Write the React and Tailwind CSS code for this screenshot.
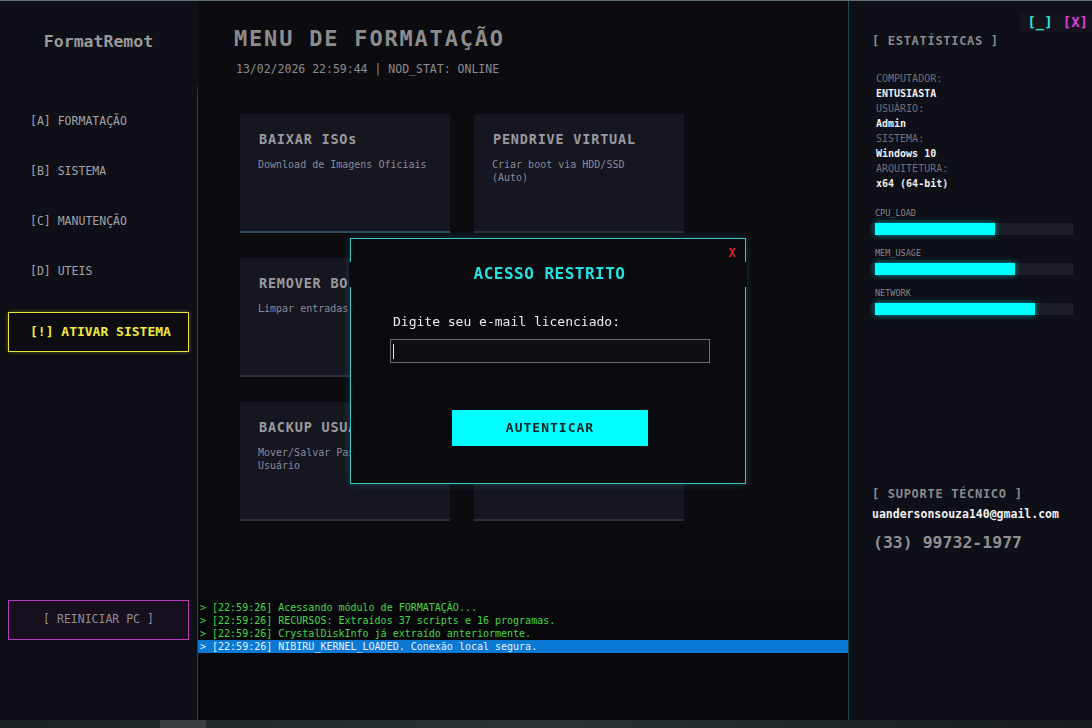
import React from 'react';

const mono = "font-['DejaVu_Sans_Mono','Liberation_Mono',monospace]";

const menu = ['[A] FORMATAÇÃO', '[B] SISTEMA', '[C] MANUTENÇÃO', '[D] UTEIS'];

const cards = [
    { title: 'BAIXAR ISOs', desc: 'Download de Imagens Oficiais', active: true },
    { title: 'PENDRIVE VIRTUAL', desc: 'Criar boot via HDD/SSD (Auto)' },
    { title: 'REMOVER BOOT', desc: 'Limpar entradas de boot' },
    { title: 'DRIVERS', desc: 'Backup e restauração' },
    { title: 'BACKUP USUÁRIO', desc: 'Mover/Salvar Pastas do Usuário' },
    { title: 'PÓS-FORMATAÇÃO', desc: 'Programas essenciais' },
];

const info = [
    ['COMPUTADOR:', 'ENTUSIASTA'],
    ['USUÁRIO:', 'Admin'],
    ['SISTEMA:', 'Windows 10'],
    ['ARQUITETURA:', 'x64 (64-bit)'],
];

const bars = [
    { label: 'CPU_LOAD', value: 60.6 },
    { label: 'MEM_USAGE', value: 70.7 },
    { label: 'NETWORK', value: 80.8 },
];

const logs = [
    'Acessando módulo de FORMATAÇÃO...',
    'RECURSOS: Extraídos 37 scripts e 16 programas.',
    'CrystalDiskInfo já extraído anteriormente.',
    'NIBIRU_KERNEL_LOADED. Conexão local segura.',
];

const Sidebar = () => (
    <div className="w-[197px] flex flex-col bg-[#0e0f17] px-[8px] pb-[80px]">
        <div className="pt-[31px] h-[96px] text-center text-[16.5px] leading-[20px] font-bold text-[#9a9a9a]">FormatRemot</div>
        {menu.map(m => (
            <div key={m} className="h-[50px] flex items-center pl-[22px] text-[11.5px] text-[#a3a3a8]">{m}</div>
        ))}
        <div className="mt-[15px] h-[40px] flex items-center pl-[21px] border border-[#ede63a] bg-[#0c0c11] shadow-[0_0_4px_rgba(237,230,58,0.35)] text-[13px] font-bold text-[#f2ea3c]">[!] ATIVAR SISTEMA</div>
        <div className="mt-auto h-[40px] flex items-center justify-center border border-[#b83db8] bg-[#170f1d] text-[11.5px] text-[#8e8e96]">[ REINICIAR PC ]</div>
    </div>
);

const Card = ({ title, desc, active }) => (
    <div className={`h-[119px] bg-[#161620] border-b-2 ${active ? 'border-[#284f5a]' : 'border-[#2c2c3a]'} pt-[17px] pl-[19px] pr-[8px]`}>
        <div className="text-[13.5px] leading-[16px] font-bold tracking-[0.8px] text-[#9a9a9e]">{title}</div>
        <div className="mt-[11px] ml-[-1px] text-[10px] leading-[13px] text-[#8a8a96] w-[171px]">{desc}</div>
    </div>
);

const Main = () => (
    <div className="w-[650px] flex flex-col bg-[#0b0b10]">
        <div className="flex-1 pl-[36px]">
            <div className="pt-[24px] text-[22px] leading-[28px] font-bold tracking-[1.8px] text-[#8c8c8c]">MENU DE FORMATAÇÃO</div>
            <div className="mt-[9px] pl-[2px] text-[11.5px] leading-[14px] text-[#8c8c90]">13/02/2026 22:59:44 | NOD_STAT: ONLINE</div>
            <div className="mt-[38px] ml-[6px] grid grid-cols-[210px_210px] gap-x-[24px] gap-y-[25px]">
                {cards.map(c => <Card key={c.title} {...c} />)}
            </div>
        </div>
        <div className="h-[120px] bg-[#08080c] pt-[1px] text-[10px] leading-[13px]">
            {logs.map((l, i) => (
                <div key={i} className={`pl-[2px] whitespace-pre ${i === 3 ? 'bg-[#0b78d4] text-[#e6f2ff]' : 'text-[#45d845]'}`}>{'> [22:59:26] ' + l}</div>
            ))}
        </div>
    </div>
);

const Stats = () => (
    <div className="relative w-[243px] flex flex-col bg-[#0e0f17] pl-[23px] pr-[19px]">
        <div className="absolute top-[11px] right-0 w-[72px] h-[20px] bg-[#13141c] flex items-center justify-end gap-[10px] pr-[4px] text-[14px] font-bold">
            <span className="text-[#2ee6d6]">[_]</span>
            <span className="text-[#e03ce0]">[X]</span>
        </div>
        <div className="mt-[32px] text-[12px] leading-[16px] font-bold tracking-[0.7px] text-[#8a8a8e]">[ ESTATÍSTICAS ]</div>
        <div className="mt-[22px] pl-[4px] text-[10px] leading-[15px]">
            {info.map(([k, v]) => (
                <React.Fragment key={k}>
                    <div className="text-[#6f6f76]">{k}</div>
                    <div className="font-bold text-[#f0f0f0]">{v}</div>
                </React.Fragment>
            ))}
        </div>
        <div className="mt-[17px] pl-[3px]">
            {bars.map(b => (
                <div key={b.label} className="mb-[13px]">
                    <div className="text-[8.5px] leading-[10px] text-[#85858c]">{b.label}</div>
                    <div className="mt-[5px] h-[12px] bg-[#1c1d27]">
                        <div className="h-full bg-[#00ffff] shadow-[0_0_6px_rgba(0,255,255,0.6)]" style={{ width: `${b.value}%` }} />
                    </div>
                </div>
            ))}
        </div>
        <div className="mt-[158px] text-[12px] leading-[16px] font-bold tracking-[0.7px] text-[#8a8a8e]">[ SUPORTE TÉCNICO ]</div>
        <div className="mt-[5px] text-[11.5px] leading-[14px] font-bold text-[#f2f2f2]">uandersonsouza140@gmail.com</div>
        <div className="mt-[11px] pl-[1px] text-[16.5px] leading-[22px] font-bold text-[#909094]">(33) 99732-1977</div>
    </div>
);

const Modal = () => (
    <div className="fixed inset-0 flex items-center justify-center pb-[6px] pl-[4px] pointer-events-none">
        <div className={`relative w-[396px] h-[246px] bg-[#0a0a0f] border border-[#3cc6c6] shadow-[0_0_8px_rgba(60,198,198,0.25)] flex flex-col items-center pointer-events-auto ${mono}`}>
            <span className="absolute left-[-2px] top-[23px] w-[3px] h-[25px] bg-[#0a0a0f]" />
            <span className="absolute right-[-2px] top-[23px] w-[3px] h-[25px] bg-[#0a0a0f]" />
            <div className="absolute top-[5px] right-[9px] text-[12px] font-bold text-[#e0201e]">X</div>
            <div className="mt-[25px] ml-[3px] h-[20px] text-[16px] leading-[20px] font-bold tracking-[0.5px] text-[#22e2e2]">ACESSO RESTRITO</div>
            <div className="mt-[29px] ml-[4px] w-[320px] pl-[3px] text-[13px] leading-[18px] text-[#ececec]">Digite seu e-mail licenciado:</div>
            <div className="mt-[8px] ml-[4px] w-[320px] h-[24px] border border-[#6c6c6c] bg-[#0f0f15] flex items-center pl-[2px]">
                <span className="w-[1px] h-[15px] bg-[#e8e8e8]" />
            </div>
            <div className="mt-[47px] ml-[4px] w-[196px] h-[36px] bg-[#00ffff] flex items-center justify-center text-[13px] font-bold tracking-[1px] text-[#0b2222]">AUTENTICAR</div>
        </div>
    </div>
);

export default function App() {
    return (
        <div className={`w-[1092px] h-[728px] overflow-hidden flex flex-col bg-[#0b0b10] ${mono}`}>
            <div className="h-[1px] bg-[#5f6e6e]" />
            <div className="flex-1 flex">
                <Sidebar />
                <div className="w-[1px] bg-gradient-to-b from-[#0e0f17] from-[11%] to-[#1d4550] to-[13%]" />
                <Main />
                <div className="w-[1px] bg-[#1f4a55]" />
                <Stats />
            </div>
            <div className="h-[8px] bg-gradient-to-r from-[#1b2226] via-[#2a3236] to-[#151b1f] flex">
                <div className="ml-[160px] w-[46px] h-full bg-[#3a3d42]" />
            </div>
            <Modal />
        </div>
    );
}
